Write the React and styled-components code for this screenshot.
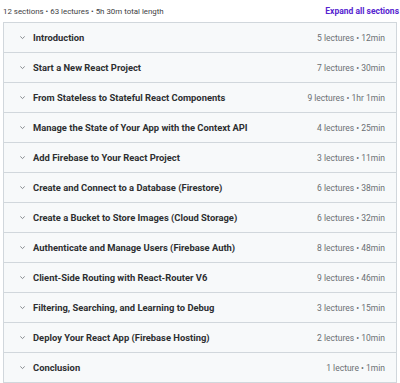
import React from 'react';
import styled, { createGlobalStyle } from 'styled-components';

const GlobalStyle = createGlobalStyle`
  html, body {
    margin: 0;
    padding: 0;
    background: #ffffff;
    font-family: Roboto, "Liberation Sans", Arial, sans-serif;
    color: #2d2f31;
  }
`;

const Page = styled.div`
  width: 400px;
  padding: 3px 3px 0 3px;
  box-sizing: border-box;
`;

const Summary = styled.div`
  display: flex;
  justify-content: space-between;
  align-items: center;
  height: 16px;
  padding: 0 0 3px 0;
  font-size: 8.5px;
`;

const Meta = styled.span`
  font-size: 7.9px;
  color: #3e4143;
`;

const ExpandLink = styled.button`
  border: 0;
  background: none;
  padding: 0;
  margin-right: -2px;
  font: inherit;
  font-weight: 700;
  color: #5624d0;
  cursor: pointer;
`;

const Accordion = styled.div`
  width: 392px;
  border: 1px solid #d1d7dc;
  border-bottom: 0;
`;

const Row = styled.div`
  display: flex;
  align-items: center;
  height: 29px;
  padding: 0 11px 0 15px;
  background: #f7f9fa;
  border-bottom: 1px solid #d1d7dc;
`;

const Chevron = styled.svg`
  width: 7px;
  height: 7px;
  margin-right: 7px;
  flex-shrink: 0;
`;

const Title = styled.span`
  flex: 1;
  font-size: 9.4px;
  font-weight: 700;
  color: #2d2f31;
  white-space: nowrap;
`;

const Info = styled.span`
  font-size: 8.5px;
  color: #6a6f73;
  white-space: nowrap;
`;

const sections = [
  ['Introduction', '5 lectures • 12min'],
  ['Start a New React Project', '7 lectures • 30min'],
  ['From Stateless to Stateful React Components', '9 lectures • 1hr 1min'],
  ['Manage the State of Your App with the Context API', '4 lectures • 25min'],
  ['Add Firebase to Your React Project', '3 lectures • 11min'],
  ['Create and Connect to a Database (Firestore)', '6 lectures • 38min'],
  ['Create a Bucket to Store Images (Cloud Storage)', '6 lectures • 32min'],
  ['Authenticate and Manage Users (Firebase Auth)', '8 lectures • 48min'],
  ['Client-Side Routing with React-Router V6', '9 lectures • 46min'],
  ['Filtering, Searching, and Learning to Debug', '3 lectures • 15min'],
  ['Deploy Your React App (Firebase Hosting)', '2 lectures • 10min'],
  ['Conclusion', '1 lecture • 1min'],
];

export default function App() {
  return (
    <>
      <GlobalStyle />
      <Page>
        <Summary>
          <Meta>12 sections • 63 lectures • 5h 30m total length</Meta>
          <ExpandLink>Expand all sections</ExpandLink>
        </Summary>
        <Accordion>
          {sections.map(([title, info]) => (
            <Row key={title}>
              <Chevron viewBox="0 0 8 8">
                <path d="M1.5 2.8 L4 5.2 L6.5 2.8" fill="none" stroke="#6a6f73" strokeWidth="0.9" />
              </Chevron>
              <Title>{title}</Title>
              <Info>{info}</Info>
            </Row>
          ))}
        </Accordion>
      </Page>
    </>
  );
}
